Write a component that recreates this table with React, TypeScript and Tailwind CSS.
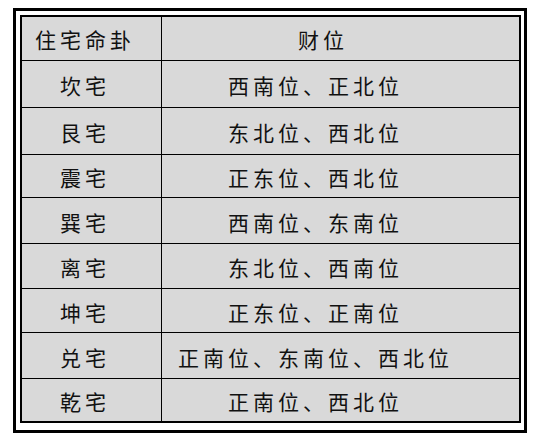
import React from "react";

const rows: { a: string; b: string; h: string }[] = [
  { a: "坎宅", b: "西南位、正北位", h: "h-[47px]" },
  { a: "艮宅", b: "东北位、西北位", h: "h-[47px]" },
  { a: "震宅", b: "正东位、西北位", h: "h-[43px]" },
  { a: "巽宅", b: "西南位、东南位", h: "h-[46px]" },
  { a: "离宅", b: "东北位、西南位", h: "h-[45px]" },
  { a: "坤宅", b: "正东位、正南位", h: "h-[44px]" },
  { a: "兑宅", b: "正南位、东南位、西北位", h: "h-[46px]" },
  { a: "乾宅", b: "正南位、西北位", h: "h-[42px]" },
];

export default function App() {
  return (
    <div
      className="w-[540px] h-[440px] bg-white pt-[8px] pl-[13px] text-[#111]"
      style={{ fontFamily: '"Noto Sans CJK SC", "Noto Sans", sans-serif' }}
    >
      <div className="box-border w-[514px] h-[425px] border-[3px] border-black pt-[4px] pl-[4px] pr-[3px] pb-[7px]">
        <div className="box-border w-[501px] h-[408px] border-2 border-black bg-[#d9d9d9] flex flex-col text-[21px] leading-none tracking-[4px]">
          <div className="flex h-[44px] border-b border-black shrink-0">
            <div className="w-[140px] border-r border-black flex items-center pl-[13px] pt-[2px]">
              住宅命卦
            </div>
            <div className="flex-1 flex items-center justify-center pr-[35px] pt-[2px]">
              财位
            </div>
          </div>
          {rows.map((r, i) => (
            <div
              key={r.a}
              className={`flex shrink-0 ${r.h} ${i < rows.length - 1 ? "border-b border-black" : ""}`}
            >
              <div className="w-[140px] border-r border-black flex items-center pl-[38px] pt-[3px]">
                {r.a}
              </div>
              <div className="flex-1 flex items-center justify-center pr-[50px] pt-[3px]">
                {r.b}
              </div>
            </div>
          ))}
        </div>
      </div>
    </div>
  );
}
